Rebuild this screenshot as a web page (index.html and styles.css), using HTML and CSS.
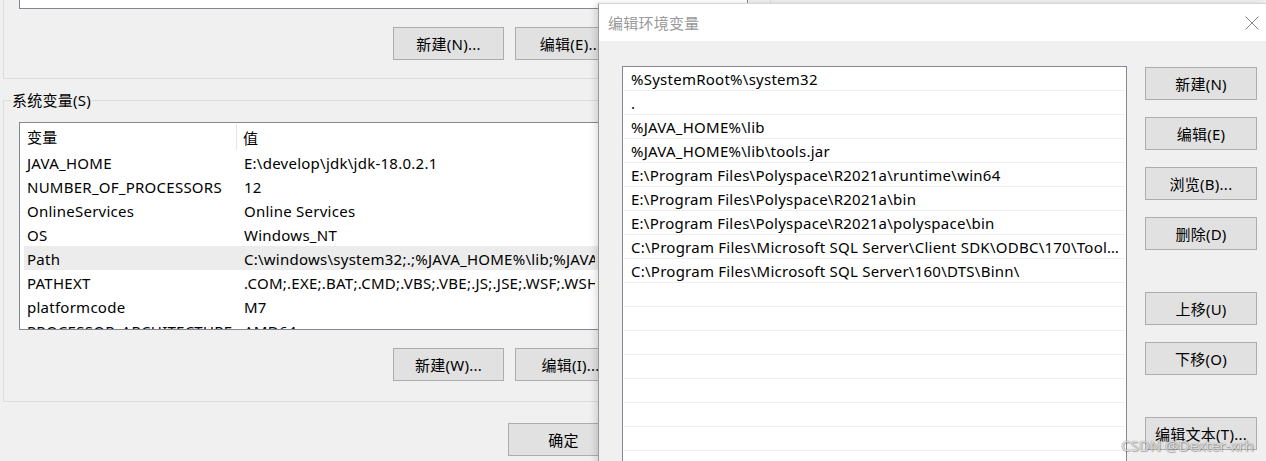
FILE: index.html
```html
<!DOCTYPE html>
<html lang="zh-CN">
<head>
<meta charset="utf-8">
<title>编辑环境变量</title>
<link rel="stylesheet" href="styles.css">
</head>
<body>
<div class="desktop">
  <div class="envwin">
    <div class="group user">
      <div class="listbox stub"></div>
      <div class="btnrow">
        <button class="btn">新建(N)...</button>
        <button class="btn">编辑(E)...</button>
        <button class="btn">删除(D)</button>
      </div>
    </div>
    <fieldset class="group system">
      <legend>系统变量(S)</legend>
      <div class="listbox sys">
        <div class="vrow head"><span class="c1">变量</span><span class="c2">值</span></div>
        <div class="vrow"><span class="c1">JAVA_HOME</span><span class="c2">E:\develop\jdk\jdk-18.0.2.1</span></div>
        <div class="vrow"><span class="c1">NUMBER_OF_PROCESSORS</span><span class="c2">12</span></div>
        <div class="vrow"><span class="c1">OnlineServices</span><span class="c2">Online Services</span></div>
        <div class="vrow"><span class="c1">OS</span><span class="c2">Windows_NT</span></div>
        <div class="vrow sel"><span class="c1">Path</span><span class="c2">C:\windows\system32;.;%JAVA_HOME%\lib;%JAVA_HOME%\lib\tools.jar;E:\Program Files</span></div>
        <div class="vrow"><span class="c1">PATHEXT</span><span class="c2">.COM;.EXE;.BAT;.CMD;.VBS;.VBE;.JS;.JSE;.WSF;.WSH;.MSC</span></div>
        <div class="vrow"><span class="c1">platformcode</span><span class="c2">M7</span></div>
        <div class="vrow"><span class="c1">PROCESSOR_ARCHITECTURE</span><span class="c2">AMD64</span></div>
      </div>
      <div class="btnrow">
        <button class="btn">新建(W)...</button>
        <button class="btn">编辑(I)...</button>
        <button class="btn">删除(L)</button>
      </div>
    </fieldset>
    <div class="btnrow okrow">
      <button class="btn">确定</button>
      <button class="btn">取消</button>
    </div>
  </div>

  <div class="dialog">
    <div class="titlebar">
      <span class="title">编辑环境变量</span>
      <svg class="close" width="14" height="14" viewBox="0 0 14 14"><path d="M0.5 0.5 L13.5 13.5 M13.5 0.5 L0.5 13.5" stroke="#8a8a8a" stroke-width="1" fill="none"/></svg>
    </div>
    <div class="dbody">
      <div class="listbox paths">
        <div class="prow">%SystemRoot%\system32</div>
        <div class="prow">.</div>
        <div class="prow">%JAVA_HOME%\lib</div>
        <div class="prow">%JAVA_HOME%\lib\tools.jar</div>
        <div class="prow">E:\Program Files\Polyspace\R2021a\runtime\win64</div>
        <div class="prow">E:\Program Files\Polyspace\R2021a\bin</div>
        <div class="prow">E:\Program Files\Polyspace\R2021a\polyspace\bin</div>
        <div class="prow">C:\Program Files\Microsoft SQL Server\Client SDK\ODBC\170\Tools\Binn\</div>
        <div class="prow">C:\Program Files\Microsoft SQL Server\160\DTS\Binn\</div>
        <div class="prow"></div>
        <div class="prow"></div>
        <div class="prow"></div>
        <div class="prow"></div>
        <div class="prow"></div>
        <div class="prow"></div>
        <div class="prow"></div>
        <div class="prow"></div>
      </div>
      <div class="actions">
        <div class="agroup">
          <button class="btn">新建(N)</button>
          <button class="btn">编辑(E)</button>
          <button class="btn">浏览(B)...</button>
          <button class="btn">删除(D)</button>
        </div>
        <div class="agroup">
          <button class="btn">上移(U)</button>
          <button class="btn">下移(O)</button>
        </div>
        <div class="agroup">
          <button class="btn">编辑文本(T)...</button>
        </div>
      </div>
    </div>
  </div>

  <div class="watermark">CSDN @Dexter-xrh</div>
</div>
</body>
</html>
```
FILE: styles.css
```css
* { box-sizing: border-box; }
html, body { margin: 0; padding: 0; }
body {
  background: #f0f0f0;
  font-family: "Noto Sans", "Noto Sans CJK SC", sans-serif;
  font-size: 15px;
  letter-spacing: 0.25px;
  color: #000;
}
.desktop {
  position: relative;
  width: 1266px;
  height: 461px;
  overflow: hidden;
}

/* left environment-variable window */
.envwin {
  width: 780px;
}
.group {
  margin: 0 9px 0 3px;
  border: 1px solid #dcdcdc;
}
.group.user {
  border-top: none;
  padding: 0 22px 18px 15px;
}
.listbox {
  background: #fff;
  border: 1px solid #828790;
  overflow: hidden;
}
.listbox.stub {
  height: 9px;
  border-top: none;
}
.btnrow {
  display: flex;
  justify-content: flex-end;
  gap: 11px;
  margin-top: 18px;
}
.btn {
  width: 111px;
  height: 33px;
  padding: 0;
  background: #e1e1e1;
  border: 1px solid #adadad;
  font: inherit;
  letter-spacing: inherit;
  color: #000;
  white-space: nowrap;
}
.group.system {
  margin-top: 11px;
  padding: 0 22px 20px 15px;
  min-width: 0;
}
.group.system legend {
  padding: 0 1px;
  margin-left: -8px;
  line-height: 20px;
}
.listbox.sys {
  margin-top: 12px;
  height: 208px;
}
.vrow {
  display: flex;
  height: 24px;
  align-items: center;
  white-space: nowrap;
  margin-left: 4px;
  padding-top: 1px;
}
.vrow.head {
  height: 27px;
  margin-left: 0;
  padding-top: 0;
}
.vrow .c1 {
  width: 217px;
  flex: none;
  padding-left: 3px;
}
.vrow.head .c1 {
  width: 217px;
  padding-left: 7px;
  height: 26px;
  line-height: 27px;
  border-right: 1px solid #e5e5e5;
}
.vrow.head .c2 { padding-left: 6px; padding-top: 1px; }
.vrow .c2 {
  padding-left: 3px;
  width: 354px;
  overflow: hidden;
}
.vrow.sel { background: #ececec; }
.okrow {
  margin-top: 21px;
  padding-right: 39px;
}

/* dialog */
.dialog {
  position: absolute;
  left: 598px;
  top: 3px;
  width: 668px;
  height: 470px;
  background: #f0f0f0;
  border-left: 1px solid #9a9a9a;
  border-top: 1px solid #d6d6d6;
  box-shadow: -3px 0 6px rgba(0, 0, 0, 0.12);
}
.titlebar {
  height: 37px;
  background: #fff;
  display: flex;
  align-items: center;
  justify-content: space-between;
  padding: 0 7px 0 9px;
}
.title {
  color: #999;
  font-size: 15px;
}
.close { display: block; }
.dbody {
  display: flex;
  gap: 18px;
  padding: 25px 9px 0 23px;
}
.listbox.paths {
  width: 505px;
  height: 420px;
  flex: none;
}
.prow {
  height: 24px;
  line-height: 21px;
  padding: 2px 0 0 7px;
  border-bottom: 1px solid #efefef;
  white-space: nowrap;
  overflow: hidden;
  text-overflow: ellipsis;
  margin: 0 1px;
}
.actions {
  display: flex;
  flex-direction: column;
  gap: 42px;
  padding-top: 1px;
}
.agroup {
  display: flex;
  flex-direction: column;
  gap: 17px;
}
.actions .btn { width: 112px; }

.watermark {
  position: absolute;
  left: 1121px;
  top: 435px;
  font-size: 15px;
  letter-spacing: 0;
  color: rgba(255, 255, 255, 0.8);
  text-shadow: 0 0 1px rgba(0, 0, 0, 0.6), 1px 1px 1px rgba(0, 0, 0, 0.25);
  white-space: nowrap;
}
```
